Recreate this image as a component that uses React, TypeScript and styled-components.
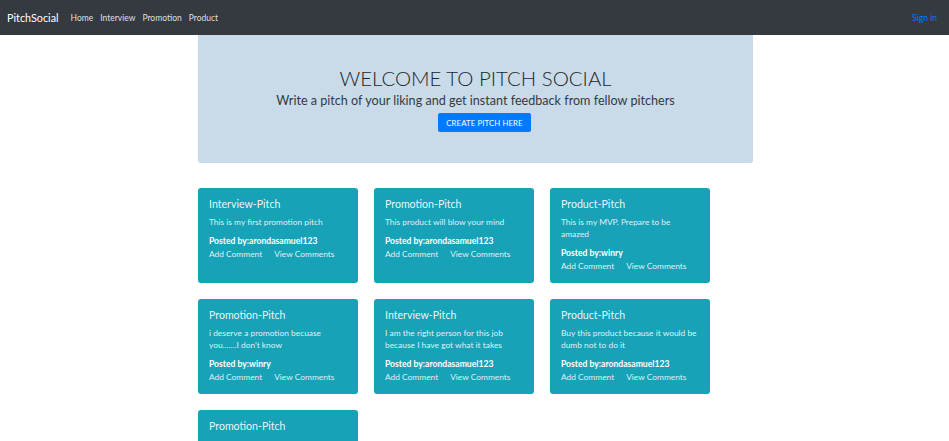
import React from "react";
import styled, { createGlobalStyle } from "styled-components";

const Global = createGlobalStyle`
  html, body { margin: 0; padding: 0; background: #fff; }
  body { font-family: "Lato", "Open Sans", sans-serif; color: #212529; }
  * { box-sizing: border-box; }
`;

const Nav = styled.nav`
  height: 35px;
  background: #343a40;
  display: flex;
  align-items: center;
  padding: 0 12px 0 7px;
`;

const Brand = styled.a`
  color: #fff;
  font-size: 10.8px;
  margin-right: 12px;
  text-decoration: none;
`;

const NavLinks = styled.div`
  display: flex;
  gap: 7px;
  flex: 1;
`;

const NavLink = styled.a`
  color: rgba(255, 255, 255, 0.85);
  font-size: 8.5px;
  text-decoration: none;
`;

const SignIn = styled.a`
  color: #007bff;
  font-size: 8.6px;
  text-decoration: none;
`;

const Page = styled.div`
  padding-left: 2px;
`;

const Container = styled.main`
  width: 555px;
  margin: 0 auto;
`;

const Jumbotron = styled.section`
  background: #c9dbe9;
  border-radius: 0 0 3px 3px;
  height: 128px;
  display: flex;
  flex-direction: column;
  align-items: center;
  padding-top: 31px;
`;

const Heading = styled.h1`
  margin: 0;
  font-weight: 300;
  font-size: 20.4px;
  line-height: 24px;
  color: #212529;
`;

const Lead = styled.p`
  margin: 2px 0 0;
  font-size: 12.6px;
  line-height: 17px;
  color: #343a40;
`;

const Button = styled.a`
  margin: 4px 0 0 18px;
  background: #007bff;
  color: #fff;
  font-size: 7.8px;
  padding: 0 8px;
  height: 19px;
  display: flex;
  align-items: center;
  border-radius: 2px;
  letter-spacing: 0.1px;
`;

const Grid = styled.div`
  margin-top: 25px;
  display: grid;
  grid-template-columns: repeat(3, 160px);
  gap: 16px;
`;

const Card = styled.article`
  background: #17a2b8;
  border-radius: 3px;
  padding: 9px 11px 10px;
  color: rgba(255, 255, 255, 0.88);
  min-height: 95px;
`;

const Title = styled.h5`
  margin: 0 0 4px;
  font-weight: 400;
  font-size: 10.6px;
  line-height: 15px;
  color: rgba(255, 255, 255, 0.92);
`;

const Text = styled.p`
  margin: 0 0 7px;
  font-size: 8.4px;
  line-height: 12px;
`;

const Posted = styled.div`
  font-size: 8.6px;
  line-height: 13px;
  font-weight: 700;
  color: #fff;
`;

const Links = styled.div`
  display: flex;
  gap: 12px;
  font-size: 8.4px;
  line-height: 13px;
`;

const pitches = [
  { t: "Interview-Pitch", b: "This is my first promotion pitch", a: "arondasamuel123" },
  { t: "Promotion-Pitch", b: "This product will blow your mind", a: "arondasamuel123" },
  { t: "Product-Pitch", b: "This is my MVP. Prepare to be amazed", a: "winry" },
  { t: "Promotion-Pitch", b: "i deserve a promotion becuase you.......I don't know", a: "winry" },
  { t: "Interview-Pitch", b: "I am the right person for this job because I have got what it takes", a: "arondasamuel123" },
  { t: "Product-Pitch", b: "Buy this product because it would be dumb not to do it", a: "arondasamuel123" },
  { t: "Promotion-Pitch", b: "", a: "" },
];

export default function App() {
  return (
    <>
      <Global />
      <Nav>
        <Brand>PitchSocial</Brand>
        <NavLinks>
          <NavLink>Home</NavLink>
          <NavLink>Interview</NavLink>
          <NavLink>Promotion</NavLink>
          <NavLink>Product</NavLink>
        </NavLinks>
        <SignIn>Sign in</SignIn>
      </Nav>
      <Page>
        <Container>
          <Jumbotron>
            <Heading>WELCOME TO PITCH SOCIAL</Heading>
            <Lead>Write a pitch of your liking and get instant feedback from fellow pitchers</Lead>
            <Button>CREATE PITCH HERE</Button>
          </Jumbotron>
          <Grid>
            {pitches.map((p, i) => (
              <Card key={i}>
                <Title>{p.t}</Title>
                {p.b && (
                  <>
                    <Text>{p.b}</Text>
                    <Posted>Posted by:{p.a}</Posted>
                    <Links>
                      <span>Add Comment</span>
                      <span>View Comments</span>
                    </Links>
                  </>
                )}
              </Card>
            ))}
          </Grid>
        </Container>
      </Page>
    </>
  );
}
